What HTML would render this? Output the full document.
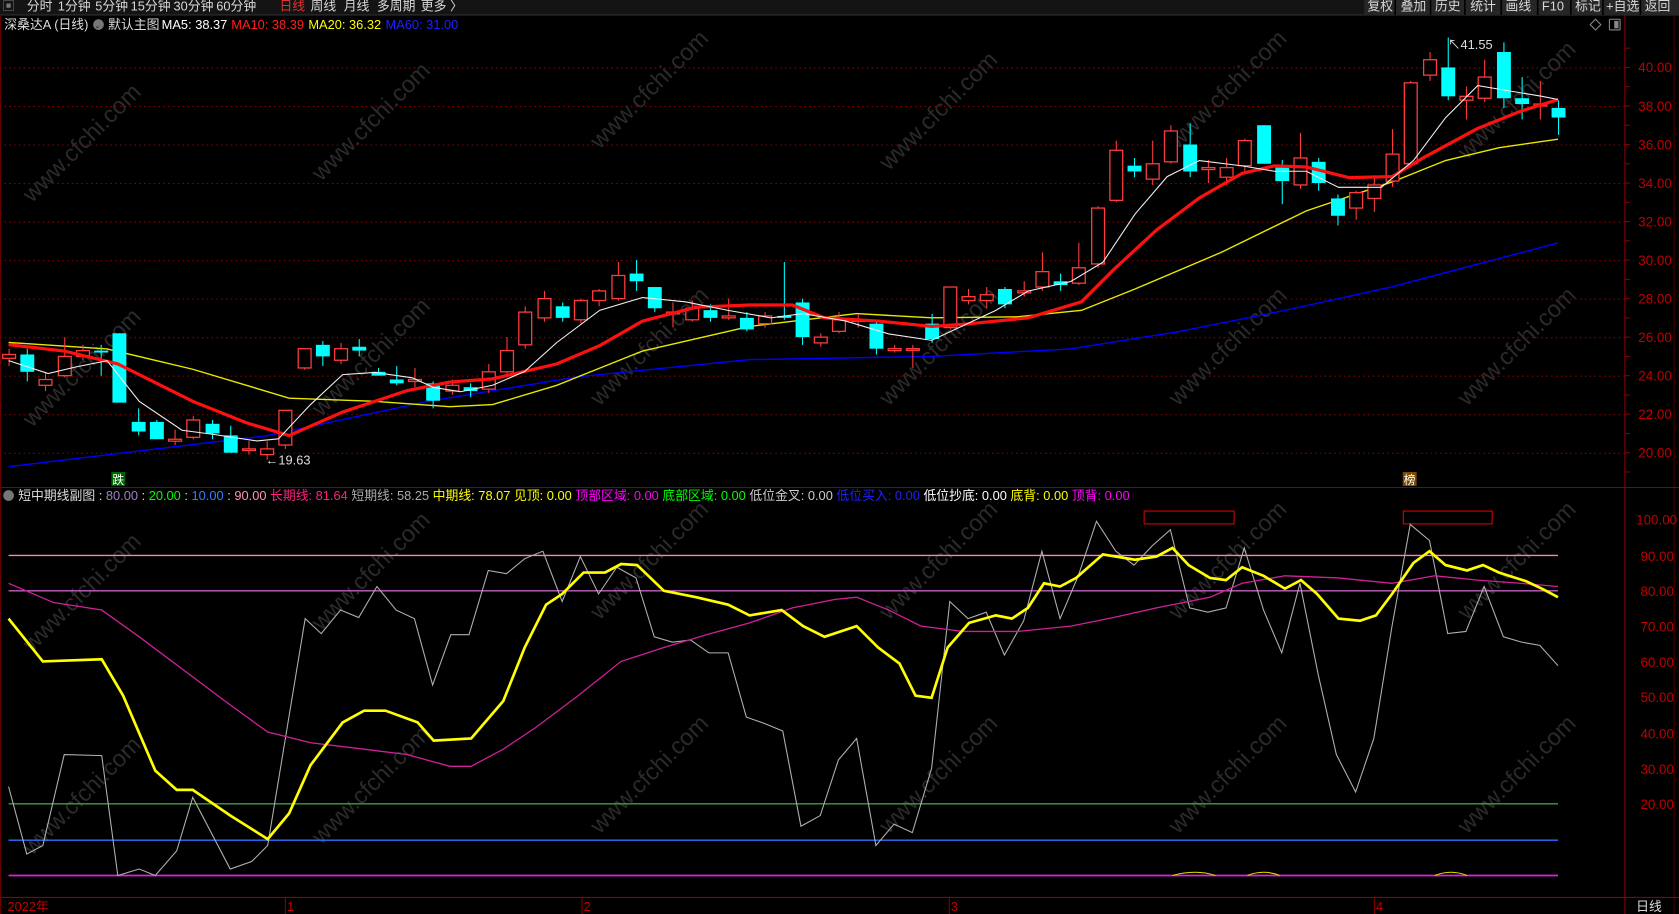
<!DOCTYPE html>
<html><head><meta charset="utf-8"><style>
html,body{margin:0;padding:0;background:#000;overflow:hidden}
svg{display:block}
text{font-family:"Liberation Sans","Noto Sans CJK SC",sans-serif}
</style></head><body>
<svg id="s" width="1679" height="914" viewBox="0 0 1568 854" preserveAspectRatio="none" xmlns="http://www.w3.org/2000/svg">
<rect width="1568" height="854" fill="#000"/>
<!-- toolbar -->
<rect x="0" y="0" width="1568" height="14" fill="#141414"/>
<line x1="0" y1="14" x2="1568" y2="14" stroke="#333"/>
<rect x="1274" y="0" width="294" height="14" fill="#262626"/>
<g font-size="12" fill="#d8d8d8">
<text x="2" y="10" fill="#777">▣</text>
<text x="25" y="10">分时</text><text x="54" y="10">1分钟</text><text x="89" y="10">5分钟</text><text x="122" y="10">15分钟</text><text x="162" y="10">30分钟</text><text x="202" y="10">60分钟</text><text x="261" y="10" fill="#e03030">日线</text><text x="290" y="10">周线</text><text x="321" y="10">月线</text><text x="352" y="10">多周期</text><text x="393" y="10">更多 〉</text>
<text x="1277" y="10">复权</text><text x="1308" y="10">叠加</text><text x="1340" y="10">历史</text><text x="1373" y="10">统计</text><text x="1406" y="10">画线</text><text x="1440" y="10">F10</text><text x="1471" y="10">标记</text><text x="1500" y="10">+自选</text><text x="1536" y="10">返回</text>
</g>
<g stroke="#000" stroke-width="1.5"><line x1="1303" y1="0" x2="1303" y2="14"/><line x1="1336" y1="0" x2="1336" y2="14"/><line x1="1368" y1="0" x2="1368" y2="14"/><line x1="1402" y1="0" x2="1402" y2="14"/><line x1="1436" y1="0" x2="1436" y2="14"/><line x1="1467" y1="0" x2="1467" y2="14"/><line x1="1497" y1="0" x2="1497" y2="14"/><line x1="1532" y1="0" x2="1532" y2="14"/></g>
<!-- header -->
<g font-size="12">
<text x="4" y="27" fill="#ddd">深桑达A (日线)</text>
<circle cx="92" cy="23" r="5" fill="#777"/><text x="88" y="26" font-size="7" fill="#222">⌄</text>
<text x="101" y="27" fill="#ddd">默认主图</text>
<text x="151" y="27" fill="#fff">MA5: 38.37</text>
<text x="216" y="27" fill="#ff2020">MA10: 38.39</text>
<text x="288" y="27" fill="#ffff00">MA20: 36.32</text>
<text x="360" y="27" fill="#2020ff">MA60: 31.00</text>
</g>
<g fill="none" stroke="#888"><path d="M1490 18l5 5-5 5-5-5z"/><rect x="1503" y="18" width="10" height="10" rx="1"/><rect x="1508" y="20" width="3" height="6" fill="#888"/></g>
<!-- axes frame -->
<line x1="1517.5" y1="14" x2="1517.5" y2="854" stroke="#8b0000"/>
<line x1="1563.5" y1="14" x2="1563.5" y2="854" stroke="#400"/>
<line x1="0" y1="455.5" x2="1568" y2="455.5" stroke="#8b0000"/>
<line x1="0" y1="838.5" x2="1568" y2="838.5" stroke="#8b0000"/>
<line x1="0.5" y1="14" x2="0.5" y2="854" stroke="#600"/>
<g id="grid" stroke="#8b0000" stroke-dasharray="1.5 3"></g>
<g id="plab" font-size="12.5" fill="#c00000"></g>
<!-- watermarks -->
<g id="wm" font-size="22" fill="#2a2a2a"></g>
<!-- MA lines -->
<polyline fill="none" stroke="#0000ff" stroke-width="1.3" points="8,436 250,407 400,375 540,352 700,336 870,333 1000,326 1100,310 1200,290 1300,268 1455,227"/>
<polyline fill="none" stroke="#e8e800" stroke-width="1.3" points="8,320 100,326 180,345 270,372 350,375 420,380 460,378 520,360 600,328 700,305 800,293 870,297 950,296 1010,290 1060,270 1140,236 1220,197 1300,170 1350,150 1400,138 1455,130"/>
<g id="candles"></g>
<polyline fill="none" stroke="#ff1010" stroke-width="3" points="8,322 60,328 110,340 180,375 230,395 270,407 320,385 380,365 420,357 460,354 520,340 560,323 600,300 650,287 700,285 740,285 770,297 820,300 870,305 900,303 960,297 1010,282 1040,252 1080,215 1120,185 1160,162 1190,155 1220,156 1260,166 1300,165 1330,147 1380,120 1420,104 1455,93"/>
<polyline fill="none" stroke="#f0f0f0" stroke-width="1" points="8,337 45,349 70,343 100,337 130,375 170,402 200,406 240,412 260,410 290,378 320,350 350,348 385,353 405,362 430,366 460,360 490,347 520,320 560,290 600,278 640,282 680,290 720,297 750,293 790,300 830,312 870,318 900,304 930,290 960,272 1000,263 1030,245 1060,200 1090,165 1120,150 1160,155 1190,160 1220,160 1250,175 1290,175 1320,150 1350,110 1380,80 1410,85 1440,90 1455,93"/>
<text x="248" y="434" font-size="12" fill="#ddd">←19.63</text>
<text x="1352" y="46" font-size="12" fill="#ddd">↖41.55</text>
<rect x="104" y="441" width="13" height="13" fill="#006400"/><text x="105" y="452" font-size="11" fill="#fff">跌</text>
<rect x="1310" y="441" width="13" height="13" fill="#7a4a00"/><text x="1311" y="452" font-size="11" fill="#fff">榜</text>
<!-- sub header -->
<g font-size="12">
<circle cx="8" cy="463" r="5" fill="#777"/>
<text x="17" y="467" fill="#ddd">短中期线副图 : <tspan fill="#a080c0">80.00</tspan> : <tspan fill="#00ff00">20.00</tspan> : <tspan fill="#3080ff">10.00</tspan> : <tspan fill="#ff90c0">90.00</tspan> <tspan fill="#ff2080">长期线: 81.64</tspan> <tspan fill="#aaa">短期线: 58.25</tspan> <tspan fill="#ffff00">中期线: 78.07</tspan> <tspan fill="#ffff00">见顶: 0.00</tspan> <tspan fill="#ff00ff">顶部区域: 0.00</tspan> <tspan fill="#00ff00">底部区域: 0.00</tspan>  <tspan fill="#ccc">低位金叉: 0.00</tspan>  <tspan fill="#2020ff">低位买入: 0.00</tspan>  <tspan fill="#fff">低位抄底: 0.00</tspan>  <tspan fill="#ffff00">底背: 0.00</tspan>  <tspan fill="#ff00ff">顶背: 0.00</tspan></text>
</g>
<rect x="1068.5" y="477.5" width="84" height="12" fill="none" stroke="#e00000"/>
<rect x="1310.5" y="477.5" width="83" height="12" fill="none" stroke="#e00000"/>
<g stroke-width="1.3">
<line x1="8" y1="519" x2="1455" y2="519" stroke="#ff80c0"/>
<line x1="8" y1="552" x2="1455" y2="552" stroke="#c060c0"/>
<line x1="8" y1="751" x2="1455" y2="751" stroke="#40a040"/>
<line x1="8" y1="785" x2="1455" y2="785" stroke="#3070ff"/>
<line x1="8" y1="818" x2="1455" y2="818" stroke="#e020e0" stroke-width="1.6"/>
</g>
<path d="M1095 818q22-6 40 0M1165 818q15-6 30 0M1340 818q15-6 30 0" fill="none" stroke="#e0e000"/>
<polyline fill="none" stroke="#b0b0b0" stroke-width="1" points="8,735 25,798 40,790 60,705 95,706 110,818 130,812 145,818 165,795 180,745 215,812 235,805 250,790 285,578 300,592 318,570 335,577 352,548 370,570 387,578 404,640 421,593 438,593 456,533 473,536 490,522 507,515 525,562 542,520 559,555 576,530 594,540 611,595 628,600 645,598 662,610 680,610 697,670 714,676 731,683 748,772 766,762 783,710 800,690 818,790 835,770 852,778 870,718 887,562 904,578 921,572 938,612 956,580 973,515 990,578 1007,538 1024,487 1042,515 1059,528 1076,510 1093,495 1111,568 1128,572 1145,568 1162,512 1180,570 1197,610 1214,545 1231,630 1248,705 1266,740 1283,690 1300,585 1317,490 1335,505 1352,592 1369,590 1386,548 1404,595 1421,600 1438,603 1455,622"/>
<polyline fill="none" stroke="#d0209a" stroke-width="1.2" points="8,545 50,563 95,570 130,595 170,625 210,655 250,684 290,694 340,700 380,705 420,716 440,716 470,700 500,680 540,650 580,618 620,605 660,593 700,582 740,568 780,560 800,558 830,570 860,585 900,590 950,590 1000,585 1040,577 1080,568 1130,558 1160,545 1200,538 1250,540 1300,545 1340,538 1380,542 1420,545 1455,548"/>
<polyline fill="none" stroke="#ffff00" stroke-width="2.5" points="8,578 40,618 95,616 115,650 145,720 165,738 180,738 215,762 250,784 270,760 290,715 320,675 340,664 360,664 390,675 405,692 440,690 470,655 490,605 510,565 525,555 545,535 565,535 580,527 595,528 620,552 650,558 680,565 700,575 730,570 750,585 770,595 800,585 820,605 840,620 855,650 870,652 885,605 905,582 930,575 945,578 960,568 975,545 990,548 1005,540 1030,518 1060,523 1080,520 1095,512 1110,528 1130,540 1145,542 1160,530 1180,538 1200,550 1215,542 1230,555 1250,578 1270,580 1285,575 1300,555 1320,526 1335,515 1350,528 1370,533 1385,528 1400,535 1425,543 1440,550 1455,558"/>
<g font-size="12.5" fill="#c00000">
<text x="1528" y="490">100.00</text><text x="1532" y="524">90.00</text><text x="1532" y="557">80.00</text><text x="1532" y="590">70.00</text><text x="1532" y="623">60.00</text><text x="1532" y="656">50.00</text><text x="1532" y="690">40.00</text><text x="1532" y="723">30.00</text><text x="1532" y="756">20.00</text>
</g>
<!-- time axis -->
<g stroke="#8b0000"><line x1="266.5" y1="838" x2="266.5" y2="854"/><line x1="543.5" y1="838" x2="543.5" y2="854"/><line x1="886.5" y1="838" x2="886.5" y2="854"/><line x1="1283.5" y1="838" x2="1283.5" y2="854"/></g>
<g font-size="12" fill="#c00000"><text x="7" y="851">2022年</text><text x="268" y="851">1</text><text x="545" y="851">2</text><text x="888" y="851">3</text><text x="1285" y="851">4</text></g>
<text x="1528" y="851" font-size="12" fill="#ddd">日线</text>
</svg>
<script>
var NS="http://www.w3.org/2000/svg";
function el(p,t,a){var e=document.createElementNS(NS,t);for(var k in a)e.setAttribute(k,a[k]);p.appendChild(e);return e;}
var g=document.getElementById('grid');
for(var p=20;p<=40;p+=2){var y=63+(40-p)*18+0.5;el(g,'line',{x1:4,y1:y,x2:1517,y2:y});}
var ax=document.getElementById('s');
for(var p=19;p<=41;p+=1){var y=63+(40-p)*18;el(ax,'line',{x1:1517,y1:y,x2:1522,y2:y,stroke:'#8b0000'});}
var wm=document.getElementById('wm');
[[30,190],[300,170],[560,140],[830,160],[1100,140],[1370,150],[30,400],[300,390],[560,380],[830,380],[1100,380],[1370,380],[30,610],[300,590],[560,580],[830,580],[1100,580],[1370,580],[30,800],[300,790],[560,780],[830,780],[1100,780],[1370,780]].forEach(function(q){var t=el(wm,'text',{x:q[0],y:q[1],transform:'rotate(-45 '+q[0]+' '+q[1]+')'});t.textContent='www.cfchi.com';});
var C=[[24.9,25.1,25.4,24.5],[25.1,24.2,25.4,23.7],[23.5,23.8,24.2,23.2],[24.0,25.0,26.0,23.9],[25.0,25.3,25.6,24.8],[25.3,25.2,25.6,24.0],[26.2,22.6,26.2,22.6],[21.6,21.1,22.3,20.9],[21.6,20.7,21.7,20.7],[20.6,20.7,21.2,20.4],[20.8,21.7,21.9,20.7],[21.5,21.0,21.7,20.7],[20.9,20.0,21.4,20.0],[20.2,20.2,20.6,19.9],[19.9,20.2,20.6,19.63],[20.4,22.2,22.2,20.2],[24.4,25.4,25.4,24.3],[25.6,25.0,25.8,24.5],[24.8,25.4,25.7,24.6],[25.5,25.3,25.9,25.0],[24.2,24.0,24.4,24.0],[23.8,23.6,24.5,23.5],[23.7,23.8,24.4,23.4],[23.6,22.7,23.7,22.3],[23.2,23.5,23.8,23.0],[23.4,23.2,23.6,22.9],[23.3,24.2,24.6,23.1],[24.2,25.3,26.0,24.0],[25.6,27.3,27.6,25.4],[27.0,28.0,28.4,26.8],[27.6,27.0,27.8,26.8],[26.9,27.9,28.0,26.7],[27.9,28.4,28.5,27.6],[28.0,29.2,29.9,27.9],[29.3,28.9,30.0,28.4],[28.6,27.5,28.6,27.3],[27.3,27.3,27.8,26.5],[26.9,27.5,27.9,26.8],[27.4,27.0,27.7,26.8],[27.0,27.1,28.0,26.9],[27.0,26.4,27.3,26.3],[26.7,27.1,27.3,26.5],[27.1,27.0,29.9,26.9],[27.8,26.0,28.0,25.6],[25.7,26.0,26.2,25.5],[26.3,26.9,27.3,26.2],[26.9,26.9,27.2,26.5],[26.7,25.4,26.8,25.1],[25.3,25.4,25.6,25.2],[25.4,25.4,25.6,24.4],[26.7,25.9,27.2,25.7],[26.5,28.6,28.6,26.4],[27.9,28.1,28.5,27.7],[27.9,28.2,28.6,27.5],[28.5,27.7,28.6,27.5],[28.3,28.4,28.9,28.1],[28.6,29.4,30.4,28.4],[28.9,28.7,29.3,28.4],[28.8,29.6,30.9,28.7],[29.8,32.7,32.8,29.6],[33.1,35.7,36.2,33.0],[34.9,34.6,35.3,34.3],[34.2,35.0,36.2,33.9],[35.1,36.7,37.0,35.0],[36.0,34.6,37.1,34.3],[34.7,34.8,35.2,34.0],[34.3,34.8,35.3,33.9],[34.9,36.2,36.3,34.5],[37.0,35.0,37.0,35.0],[34.8,34.1,35.2,32.9],[33.9,35.3,36.6,33.7],[35.1,34.0,35.3,33.6],[33.2,32.3,33.4,31.8],[32.7,33.5,33.6,32.1],[33.2,33.9,34.4,32.5],[34.1,35.5,36.8,33.8],[35.0,39.2,39.3,34.8],[39.6,40.4,40.8,39.3],[40.0,38.5,41.55,38.3],[38.3,38.5,39.0,37.3],[38.4,39.5,40.4,38.2],[40.8,38.4,41.3,37.9],[38.4,38.1,39.5,37.3],[38.0,38.1,39.3,37.3],[37.9,37.4,38.3,36.5]];
var cg=document.getElementById('candles');
function Y(p){return 63+(40-p)*18;}
C.forEach(function(c,i){var x=Math.round(8+i*17.23)+0.5;var up=c[1]>=c[0];var col=up?'#ff3c3c':'#00ffff';
el(cg,'line',{x1:x,y1:Y(c[2]),x2:x,y2:Y(c[3]),stroke:col,'stroke-width':1});
var t=Y(Math.max(c[0],c[1])),b=Y(Math.min(c[0],c[1]));var h=Math.max(b-t,1.5);
if(up){el(cg,'rect',{x:x-6,y:t,width:12,height:h,fill:'#000',stroke:col,'stroke-width':1.2});}
else{el(cg,'rect',{x:x-6.5,y:t,width:13,height:h,fill:col});}});
var pl=document.getElementById('plab');
for(var p=20;p<=40;p+=2){var t=el(pl,'text',{x:1530,y:Y(p)+4.5});t.textContent=p.toFixed(2);}
</script>
</body></html>
